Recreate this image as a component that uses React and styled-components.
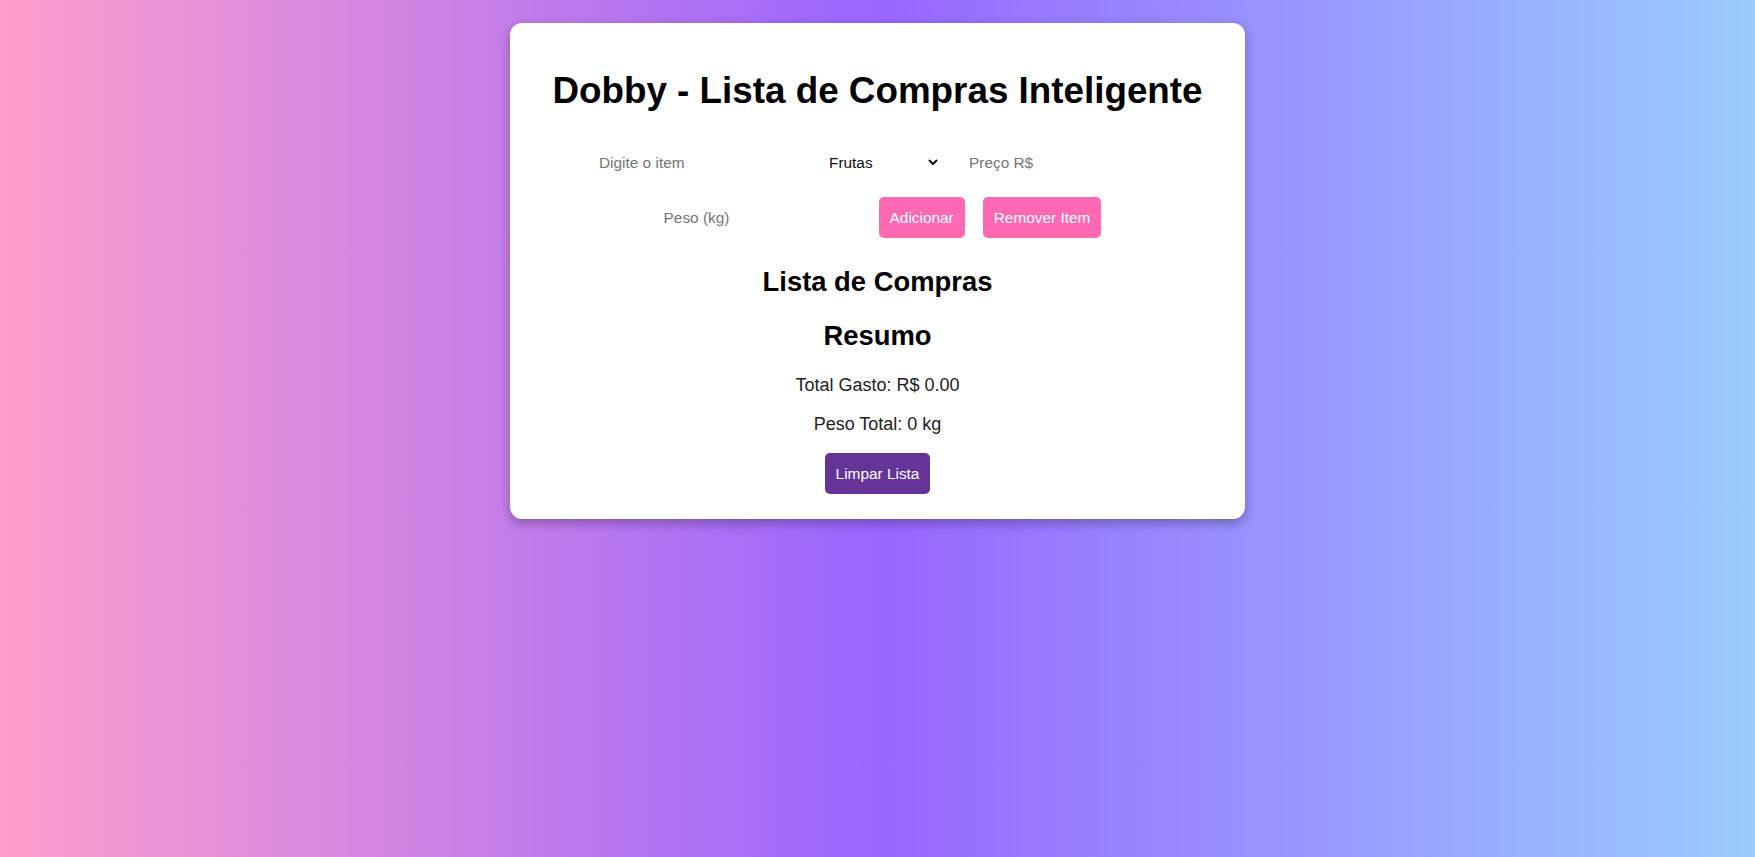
import React from 'react';
import styled, { createGlobalStyle } from 'styled-components';

const GlobalStyle = createGlobalStyle`
    html, body {
        margin: 0;
        padding: 0;
    }
    body {
        min-height: 100vh;
        font-family: "Liberation Sans", Arial, sans-serif;
        background: linear-gradient(to right, #ff9ecc 0%, #9966ff 50%, #99ccff 100%);
    }
`;

const Page = styled.div`
    min-height: 100vh;
    padding-top: 23px;
    box-sizing: border-box;
`;

const Card = styled.div`
    width: 735px;
    margin: 0 auto;
    padding: 47px 20px 25px;
    box-sizing: border-box;
    background: #ffffff;
    border-radius: 12px;
    box-shadow: 0 4px 12px rgba(0, 0, 0, 0.3);
    display: flex;
    flex-direction: column;
    align-items: center;
    text-align: center;
`;

const Title = styled.h1`
    margin: 0;
    font-size: 36.8px;
    font-weight: bold;
    color: #000;
`;

const Form = styled.div`
    margin-top: 31px;
    width: 100%;
    display: flex;
    flex-wrap: wrap;
    justify-content: center;
    align-items: center;
    gap: 15px 18px;
`;

const Field = styled.input`
    width: 207px;
    box-sizing: border-box;
    padding: 10px;
    border: none;
    outline: none;
    background: transparent;
    font-family: inherit;
    font-size: 15.4px;
    color: #222;

    &::placeholder {
        color: #757575;
    }
`;

const Select = styled.select`
    width: 127px;
    box-sizing: border-box;
    padding: 10px 6px 10px 11px;
    border: none;
    outline: none;
    background: #fff;
    font-family: inherit;
    font-size: 15.4px;
    color: #111;
`;

const Button = styled.button`
    padding: 12px 11px;
    border: none;
    border-radius: 5px;
    background: ${props => props.$variant === 'clear' ? '#663399' : '#ff69b4'};
    color: #fff;
    font-family: inherit;
    font-size: 15.4px;
    line-height: 17px;
    cursor: pointer;
    margin-top: ${props => props.$top || 0}px;
`;

const Heading = styled.h2`
    margin: ${props => props.$top}px 0 0;
    font-size: 27.4px;
    font-weight: bold;
    color: #000;
`;

const List = styled.ul`
    margin: 0;
    padding: 0;
    list-style: none;
`;

const Stat = styled.p`
    margin: ${props => props.$top}px 0 0;
    font-size: 18px;
    color: #222;
`;

const App = () => {
    return (
        <>
            <GlobalStyle />
            <Page>
                <Card>
                    <Title>Dobby - Lista de Compras Inteligente</Title>
                    <Form>
                        <Field type="text" placeholder="Digite o item" />
                        <Select defaultValue="Frutas">
                            <option>Frutas</option>
                            <option>Verduras</option>
                            <option>Carnes</option>
                            <option>Bebidas</option>
                            <option>Limpeza</option>
                        </Select>
                        <Field type="number" placeholder="Preço R$" />
                        <Field type="number" placeholder="Peso (kg)" />
                        <Button>Adicionar</Button>
                        <Button>Remover Item</Button>
                    </Form>
                    <Heading $top={28}>Lista de Compras</Heading>
                    <List />
                    <Heading $top={22}>Resumo</Heading>
                    <Stat $top={23}>Total Gasto: R$ 0.00</Stat>
                    <Stat $top={18}>Peso Total: 0 kg</Stat>
                    <Button $variant="clear" $top={18}>Limpar Lista</Button>
                </Card>
            </Page>
        </>
    );
};

export default App;
